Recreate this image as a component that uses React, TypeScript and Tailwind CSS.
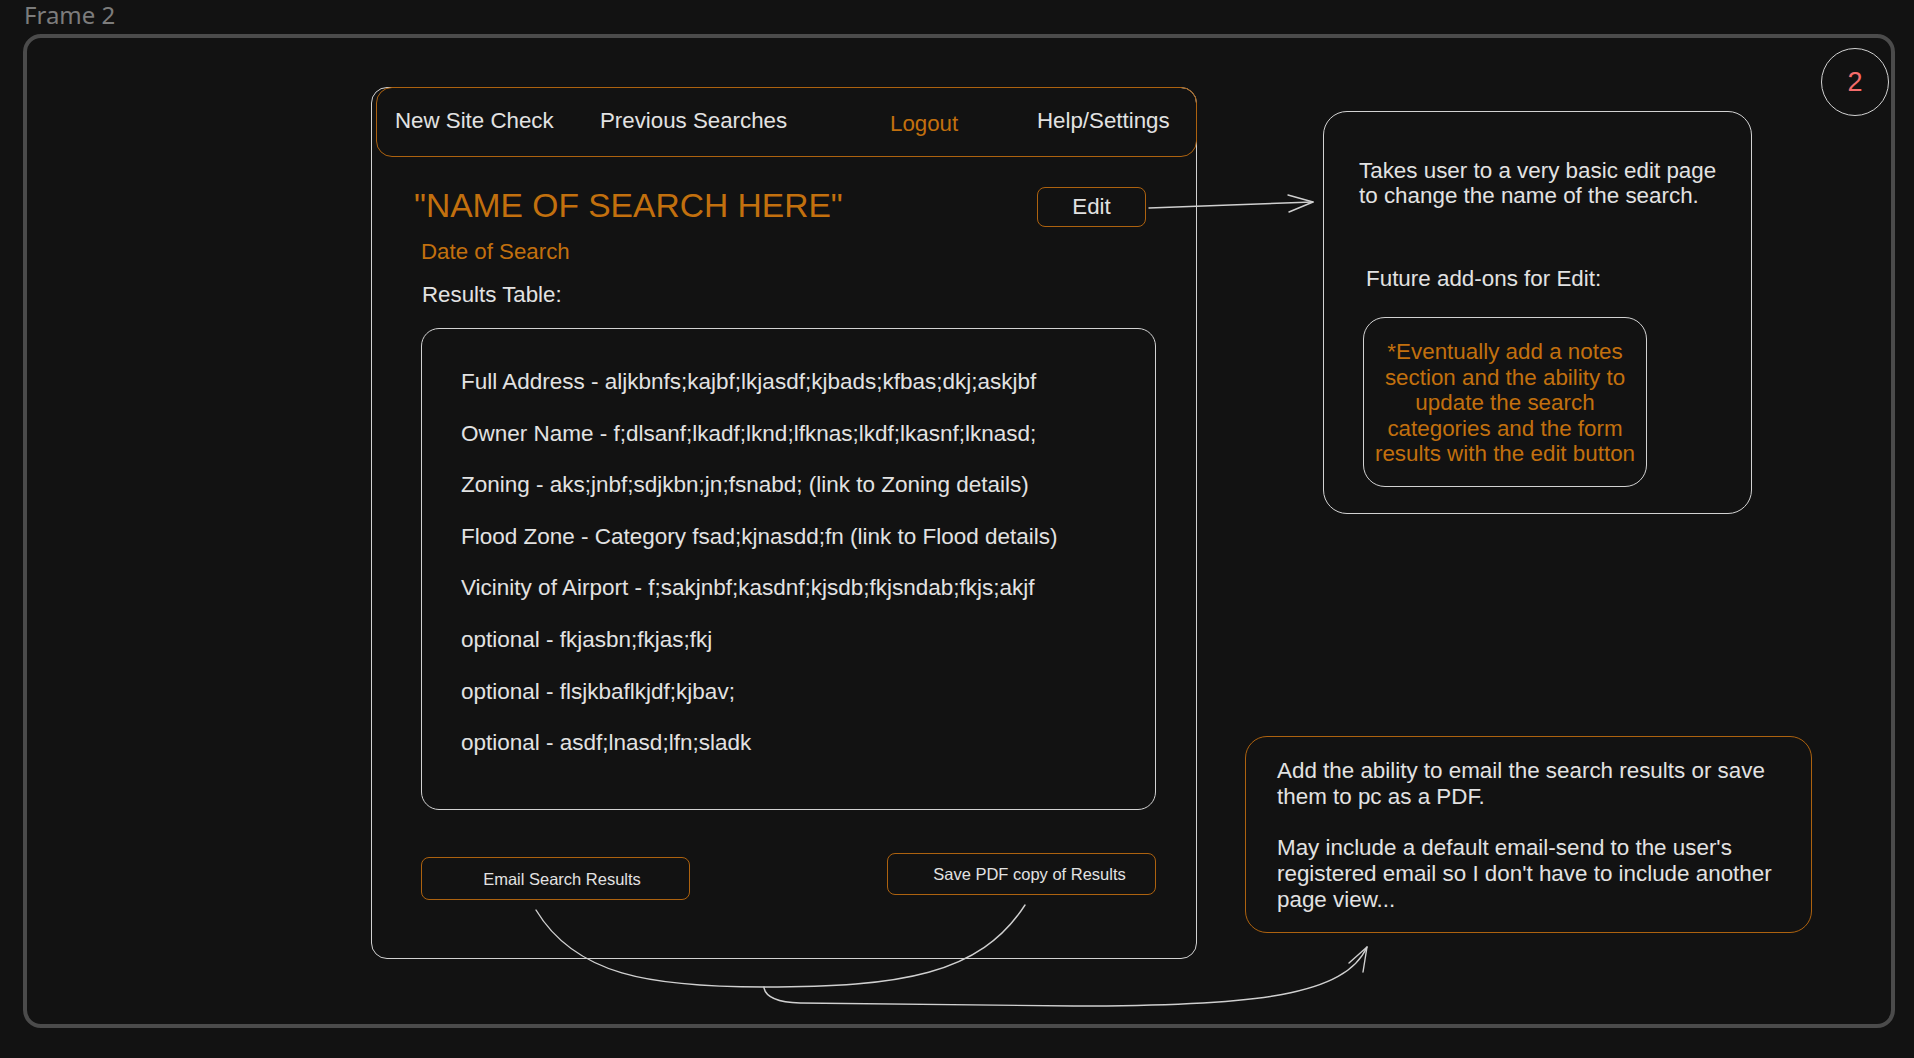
import React from 'react';

const results = [
  'Full Address - aljkbnfs;kajbf;lkjasdf;kjbads;kfbas;dkj;askjbf',
  'Owner Name - f;dlsanf;lkadf;lknd;lfknas;lkdf;lkasnf;lknasd;',
  'Zoning - aks;jnbf;sdjkbn;jn;fsnabd; (link to Zoning details)',
  'Flood Zone - Category fsad;kjnasdd;fn (link to Flood details)',
  'Vicinity of Airport - f;sakjnbf;kasdnf;kjsdb;fkjsndab;fkjs;akjf',
  'optional - fkjasbn;fkjas;fkj',
  'optional - flsjkbaflkjdf;kjbav;',
  'optional - asdf;lnasd;lfn;sladk',
];

function Arrows() {
  return (
    <svg
      className="pointer-events-none absolute left-0 top-0"
      width="1914"
      height="1058"
      viewBox="0 0 1914 1058"
      fill="none"
      stroke="#d0d0d0"
      strokeWidth="1.4"
      strokeLinecap="round"
      strokeLinejoin="round"
    >
      {/* edit -> note */}
      <path d="M1149 208 L1230 205 L1313 202" />
      <path d="M1288 195 L1313 202 L1289 212" />
      {/* email + pdf buttons join */}
      <path d="M536 910 C575 975, 650 987, 764 987" />
      <path d="M764 987 C900 987, 980 975, 1025 905" />
      {/* -> bottom note */}
      <path d="M764 988 Q767 1002 800 1003 L1074 1006 C1260 1006, 1345 995, 1367 947" />
      <path d="M1349 963 L1367 947 L1363 972" />
    </svg>
  );
}

export default function App() {
  return (
    <div className="relative h-[1058px] w-[1914px] overflow-hidden bg-[#121212] font-['Liberation_Sans',Arial,sans-serif] text-[#e2e2e2]">
      <div className="h-[34px] pl-[24px] font-['Noto_Sans',sans-serif] text-[24px] leading-[30px] text-[#7c7c7c]">
        Frame 2
      </div>

      {/* frame */}
      <div className="relative ml-[23px] flex h-[994px] w-[1872px] items-start rounded-[18px] border-4 border-[#4b4b4b]">
        {/* wireframe card */}
        <div className="ml-[344px] mt-[49px] flex h-[872px] w-[826px] flex-col rounded-[16px] border border-[#d2d2d2]">
          <div className="-mr-px -mt-px ml-[4px] flex h-[70px] items-start rounded-[16px] border border-[#ad620f] pl-[18px] pt-[20px] text-[22.3px] leading-[26px]">
            <span className="w-[205px]">New Site Check</span>
            <span className="w-[290px]">Previous Searches</span>
            <span className="mt-[3px] w-[147px] text-[#c2700e]">Logout</span>
            <span>Help/Settings</span>
          </div>

          <div className="mt-[28.5px] flex items-start justify-between">
            <div className="ml-[42px] text-[33.6px] leading-[40px] text-[#c2700e]">"NAME OF SEARCH HERE"</div>
            <button className="mr-[50px] mt-[1.5px] flex h-[40px] w-[109px] items-center justify-center rounded-[8px] border border-[#ad620f] text-[22.3px] leading-[26px]">
              Edit
            </button>
          </div>

          <div className="ml-[49px] mt-[12px] text-[22.3px] leading-[26px] text-[#c2700e]">Date of Search</div>
          <div className="ml-[50px] mt-[17px] text-[22.3px] leading-[26px]">Results Table:</div>

          <div className="ml-[49px] mt-[20px] flex h-[482px] w-[735px] flex-col gap-[25.6px] rounded-[18px] border border-[#d2d2d2] pl-[39px] pt-[40px] text-[22.5px] leading-[26px]">
            {results.map((r) => (
              <div key={r}>{r}</div>
            ))}
          </div>

          <div className="ml-[49px] flex w-[735px] items-start justify-between text-[16.5px] leading-[20px]">
            <button className="mt-[47px] flex h-[43px] w-[269px] items-center justify-center rounded-[8px] border border-[#ad620f] pl-[13px]">
              Email Search Results
            </button>
            <button className="mt-[43px] flex h-[42px] w-[269px] items-center justify-center rounded-[8px] border border-[#ad620f] pl-[16px]">
              Save PDF copy of Results
            </button>
          </div>
        </div>

        {/* notes */}
        <div className="ml-[48px] flex flex-col items-start text-[22.4px]">
          <div className="ml-[78px] mt-[73px] h-[403px] w-[429px] rounded-[24px] border border-[#d2d2d2] pl-[35px] pt-[45.6px] leading-[25px]">
            <div>
              Takes user to a very basic edit page
              <br />
              to change the name of the search.
            </div>
            <div className="ml-[7px] mt-[58px]">Future add-ons for Edit:</div>
            <div className="ml-[4px] mt-[26.4px] h-[170px] w-[284px] rounded-[22px] border border-[#d2d2d2] pt-[21.4px] text-center leading-[25.5px] text-[#c2700e]">
              *Eventually add a notes
              <br />
              section and the ability to
              <br />
              update the search
              <br />
              categories and the form
              <br />
              results with the edit button
            </div>
          </div>

          <div className="mt-[222px] h-[197px] w-[567px] rounded-[22px] border border-[#ad620f] pl-[31px] pt-[21px] leading-[25.7px]">
            Add the ability to email the search results or save
            <br />
            them to pc as a PDF.
            <br />
            <br />
            May include a default email-send to the user's
            <br />
            registered email so I don't have to include another
            <br />
            page view...
          </div>
        </div>

        {/* page badge */}
        <div className="absolute left-[1794px] top-[10px] flex h-[68px] w-[68px] items-center justify-center rounded-full border border-[#d2d2d2] text-[27px] leading-none text-[#f56c6c]">
          2
        </div>
      </div>

      <Arrows />
    </div>
  );
}
